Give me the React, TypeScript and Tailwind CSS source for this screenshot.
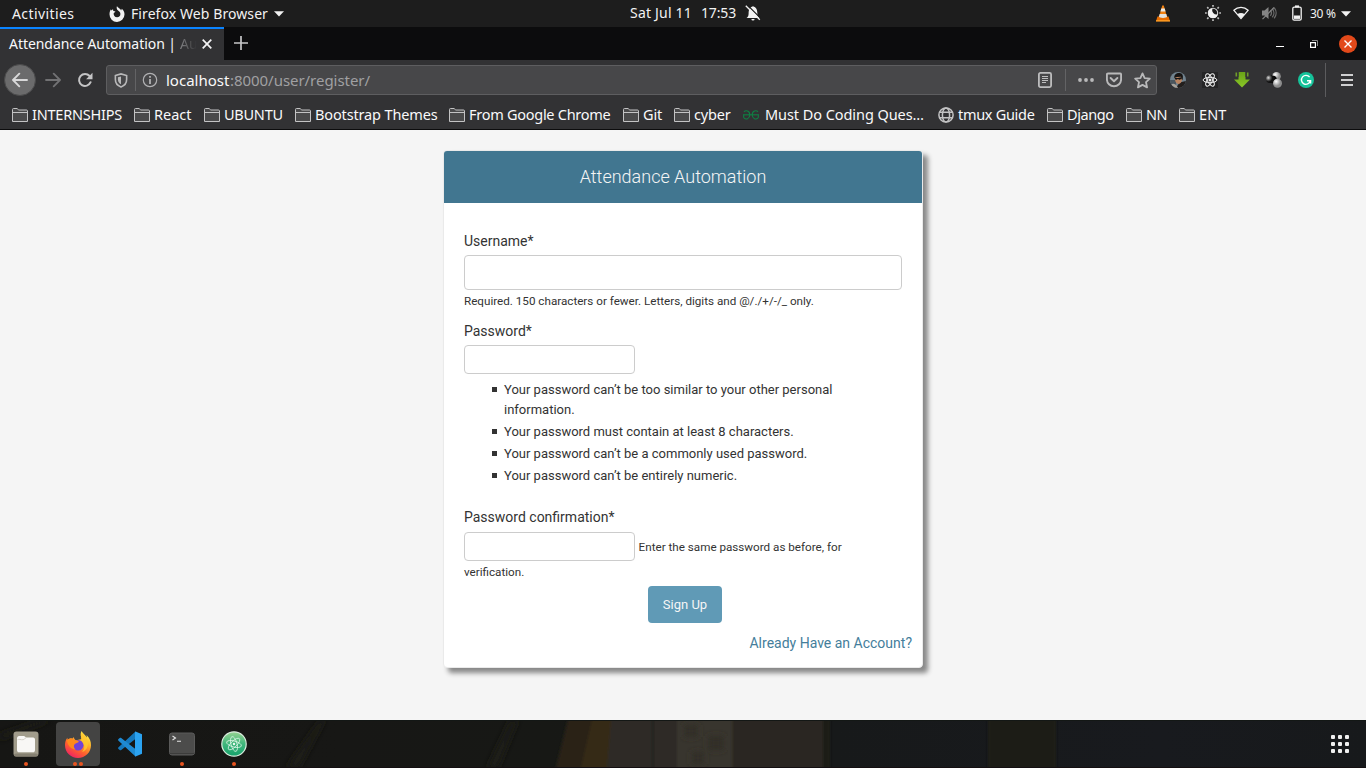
import type { ReactNode } from "react";

type IconProps = { className?: string };

const Caret = ({ className = "" }: IconProps) => (
  <svg viewBox="0 0 10 6" className={`h-[6px] w-[10px] shrink-0 ${className}`}><path d="M0 .3h10L5 5.6z" fill="#f2f2f2" /></svg>
);

const FirefoxSymbolic = ({ className = "" }: IconProps) => (
  <svg viewBox="0 0 16 16" className={`size-[16px] shrink-0 ${className}`}>
    <path d="M8 0c.3 1 1.200 1.600 2.400 2.400C11.400 3 12 3.700 12 4.500c.5-.4.700-1 .6-1.700 1.900 1.300 3 3.400 2.900 5.700A7.500 7.500 0 0 1 .5 8.300C.5 6.300 1 4.600 2 3.300c0 .5.100.9.400 1.200.5-.6 1-1 1.700-1.200-.2.800 0 1.300.4 1.700.7 0 1.500.2 1.900.5-.2.700-1 1-1.700 1.500-.3 2.300 1 4.300 3.400 4.300 2 0 3.500-1.500 3.300-3.500C11.300 6 10 5.300 8.800 4.300 7.700 3.400 7.300 1.500 8 0z" fill="#f2f2f2" />
  </svg>
);

const BellOff = ({ className = "" }: IconProps) => (
  <svg viewBox="0 0 16 16" className={`size-[16px] shrink-0 ${className}`}>
    <path d="M1.500 13h13c-1.500-1-2-2.300-2.100-4.300C12.300 4.500 11.300 2.200 8 1.300 4.700 2.200 3.700 4.500 3.600 8.700 3.500 10.700 3 12 1.500 13zM6.400 14h3.200a1.600 1.600 0 0 1-3.200 0z" fill="#f2f2f2" />
    <path d="M2.200-.1 16 13.700" stroke="#1d1d1d" strokeWidth="1.200" />
    <path d="M.8.700 14.800 14.700" stroke="#f2f2f2" strokeWidth="1.300" />
  </svg>
);

const Cone = ({ className = "" }: IconProps) => (
  <svg viewBox="0 0 16 17" className={`h-[17px] w-[16px] shrink-0 ${className}`}>
    <path d="M2.500 11.500h11l1.500 4.800H1z" fill="#e86c00" />
    <path d="M1 15.200h14v1.300H1z" fill="#ffa126" />
    <path d="M7.200.5h1.600L12 12c-1 1.600-7 1.600-8 0z" fill="#f08010" />
    <path d="M6.300 3.500h3.400l.9 3H5.400z" fill="#eceae6" />
    <path d="M4.700 9h6.600l.8 2.800c-1.200 1.500-7 1.500-8.200 0z" fill="#e4e2de" />
  </svg>
);

const NightLight = ({ className = "" }: IconProps) => (
  <svg viewBox="0 0 16 16" className={`size-[16px] shrink-0 ${className}`}>
    <circle cx="8" cy="8" r="4.700" fill="none" stroke="#d0d0d0" strokeWidth="1.100" />
    <path d="M7.500 3.300A4.900 4.900 0 1 0 12.700 9.500 4.600 4.600 0 0 1 7.500 3.300z" fill="#f2f2f2" />
    <path d="M8 0v1.800M8 14.200V16M0 8h1.800M14.200 8H16M2.200 2.200l1.300 1.300M12.500 12.500l1.300 1.300M2.200 13.800l1.300-1.300M12.500 3.500l1.300-1.300" stroke="#bdbdbd" strokeWidth="1.700" />
  </svg>
);

const Wifi = ({ className = "" }: IconProps) => (
  <svg viewBox="0 0 16 14" className={`h-[14px] w-[16px] shrink-0 ${className}`}>
    <path d="M.9 4.300C4.800.5 11.200.5 15.100 4.300L8 12.600z" fill="none" stroke="#f2f2f2" strokeWidth="1.300" />
    <path d="M4.300 8.200c2.200-1.600 5.200-1.600 7.400 0L8 12.600z" fill="#f2f2f2" />
  </svg>
);

const Muted = ({ className = "" }: IconProps) => (
  <svg viewBox="0 0 16 16" className={`size-[16px] shrink-0 ${className}`}>
    <path d="M1 5.500h2.500L7.500 2v12l-4-3.500H1z" fill="#858585" />
    <path d="M9.300 5.300c1.300 1.500 1.300 3.900 0 5.400M11.300 3.800c2.100 2.400 2.100 6 0 8.400M13.200 2.600c2.500 3.200 2.500 7.600 0 10.800" fill="none" stroke="#6d6d6d" strokeWidth="1.300" />
    <path d="M1.500 14.200 13 2.500" stroke="#858585" strokeWidth="1.200" />
  </svg>
);

const Battery = ({ className = "" }: IconProps) => (
  <svg viewBox="0 0 10 16" className={`h-[16px] w-[10px] shrink-0 ${className}`}>
    <path d="M3 .4h4v2H3z" fill="#f2f2f2" />
    <rect x=".8" y="2.200" width="8.400" height="13" rx="1.400" fill="none" stroke="#f2f2f2" strokeWidth="1.300" />
    <path d="M2 10.500h6v3.400H2z" fill="#f2f2f2" />
  </svg>
);

const Folder = () => (
  <svg viewBox="0 0 16 14" className="h-[14px] w-[16px] shrink-0">
    <path d="M.5 13.500V1.500c0-.6.300-1 1-1h3.600c.7 0 .9 1.500 1.700 1.500h7.700c.7 0 1 .4 1 1v10.500z" fill="#4a4a4b" stroke="#c3c3c4" />
    <path d="M.8 4.500h14.400" stroke="#c3c3c4" />
  </svg>
);

const Geeks = () => (
  <svg viewBox="0 0 16 10" className="h-[10px] w-[16px] shrink-0">
    <path d="M1 1.800C2.500 0 6.800.5 6.800 4.800S2.800 9.600 1.200 8.200C.6 7.600.6 6 .8 5M15 1.800C13.500 0 9.200.5 9.200 4.800s4 4.800 5.600 3.400c.6-.6.600-2.100.4-3.100" fill="none" stroke="#0f8043" strokeWidth="1.100" />
    <path d="M0 4.800h16" stroke="#0f8043" strokeWidth="1.100" />
  </svg>
);

const Globe = () => (
  <svg viewBox="0 0 16 16" className="size-[16px] shrink-0" fill="none" stroke="#c3c3c4" strokeWidth="1.500">
    <circle cx="8" cy="8" r="7.100" /><ellipse cx="8" cy="8" rx="3.600" ry="7.100" /><path d="M1.500 5.200h13M1.500 10.800h13" />
  </svg>
);

type Bookmark = { icon: ReactNode; label: string; cls: string };
const bookmarks: Bookmark[] = [
  { icon: <Folder />, label: "INTERNSHIPS", cls: "ml-[4px] w-[90px] tracking-[-0.223px]" },
  { icon: <Folder />, label: "React", cls: "ml-[4px] w-[38px]" },
  { icon: <Folder />, label: "UBUNTU", cls: "ml-[4px] w-[59px] tracking-[-0.25px]" },
  { icon: <Folder />, label: "Bootstrap Themes", cls: "ml-[4px] w-[122px] tracking-[-0.144px]" },
  { icon: <Folder />, label: "From Google Chrome", cls: "ml-[4px] w-[142px] tracking-[-0.271px]" },
  { icon: <Folder />, label: "Git", cls: "ml-[4px] w-[19px] tracking-[-0.18px]" },
  { icon: <Folder />, label: "cyber", cls: "ml-[4px] w-[37px] tracking-[-0.15px]" },
  { icon: <Geeks />, label: "Must Do Coding Ques…", cls: "ml-[6px] w-[161px] tracking-[-0.066px]" },
  { icon: <Globe />, label: "tmux Guide", cls: "ml-[4px] w-[77px] tracking-[-0.3px]" },
  { icon: <Folder />, label: "Django", cls: "ml-[4px] w-[47px] tracking-[-0.43px]" },
  { icon: <Folder />, label: "NN", cls: "ml-[4px] w-[21px] tracking-[-0.52px]" },
  { icon: <Folder />, label: "ENT", cls: "ml-[4px] w-[28px] tracking-[0.11px]" },
];

function TopBar() {
  return (
    <header className="flex h-[27px] shrink-0 items-center bg-[#1d1d1d] text-[14px] text-[#f2f2f2]">
      <span className="ml-[12px] w-[97px] tracking-[0.417px]">Activities</span>
      <FirefoxSymbolic />
      <span className="ml-[6px] w-[143px] tracking-[0.084px]">Firefox Web Browser</span>
      <Caret />
      <span className="ml-[346px] w-[71px] pb-[2px] tracking-[0.202px]">Sat Jul 11</span>
      <span className="w-[44px] pb-[2px] tracking-[-0.159px]">17:53</span>
      <BellOff className="mb-[2px]" />
      <Cone className="ml-[394px]" />
      <NightLight className="mb-[2px] ml-[34px]" />
      <Wifi className="mb-[1px] ml-[12px]" />
      <Muted className="mb-[1px] ml-[12px]" />
      <Battery className="mb-[2px] ml-[15px]" />
      <span className="ml-[8px] w-[31px] text-[12px] tracking-[-0.3px]">30 %</span>
      <Caret />
    </header>
  );
}

function TabStrip() {
  return (
    <div className="flex h-[33px] shrink-0 items-center bg-[#0c0c0d] text-[14px] text-[#f9f9fa]">
      <div className="flex h-full w-[224px] items-center border-t-2 border-[#0a84ff] bg-[#323234]">
        <span className="ml-[9px] w-[171px] pb-[2px] tracking-[-0.052px]">Attendance Automation |</span>
        <span className="w-[17px] overflow-hidden bg-gradient-to-r from-[#858587] to-[#323234] bg-clip-text pb-[2px] text-transparent">Au</span>
        <svg viewBox="0 0 10 10" className="mb-[2px] ml-[5px] size-[10px]"><path d="m.7.7 8.600 8.600M9.300.7.7 9.300" stroke="#f4f4f5" strokeWidth="1.700" /></svg>
      </div>
      <svg viewBox="0 0 14 14" className="mb-[1px] ml-[10px] size-[14px]"><path d="M7 0v14M0 7h14" stroke="#c6c6c7" strokeWidth="1.700" /></svg>
      <div className="ml-auto flex items-center pr-[9px]">
        <svg viewBox="0 0 8 8" className="size-[8px]"><path d="M0 6h8v1H0z" fill="#fff" /></svg>
        <svg viewBox="0 0 8 8" className="ml-[26px] size-[8px]" fill="none"><path d="M2 .5h5.500V6" stroke="#8a8a8a" /><path d="M.6 2.600h4.800v4.800H.6z" stroke="#fff" strokeWidth="1.200" /></svg>
        <svg viewBox="0 0 18 18" className="ml-[21px] size-[18px]"><circle cx="9" cy="9" r="9" fill="#e2491a" /><path d="m5.500 5.500 7 7M12.500 5.500l-7 7" stroke="#fff" strokeWidth="1.400" /></svg>
      </div>
    </div>
  );
}

function AddressBar() {
  return (
    <div className="flex h-[30px] w-[1051px] items-center rounded-[3px] border border-[#5e5e60] bg-[#474749] text-[15px]">
      <svg viewBox="0 0 14 16" className="ml-[7px] h-[15px] w-[14px]">
        <path d="M1 2.700 7 1l6 1.700V7c0 4-2.500 6.700-6 8-3.500-1.300-6-4-6-8z" fill="none" stroke="#b9b9ba" strokeWidth="1.700" />
        <path d="M7 3.700 3.700 4.600V7c0 2.400 1.200 4 3.300 5z" fill="#b9b9ba" />
      </svg>
      <div className="ml-[7px] h-[22px] w-px bg-[#636365]" />
      <svg viewBox="0 0 16 16" className="ml-[6px] size-[16px]">
        <circle cx="8" cy="8" r="6.700" fill="none" stroke="#b1b1b3" strokeWidth="1.200" />
        <path d="M7.100 4h1.800v1.800H7.100zM7.100 7h1.800v5H7.100z" fill="#b1b1b3" />
      </svg>
      <span className="ml-[8px] w-[64px] text-[#f9f9fa]">localhost</span>
      <span className="tracking-[-0.045px] text-[#a0a0a2]">:8000/user/register/</span>
      <svg viewBox="0 0 14 16" className="ml-auto h-[16px] w-[14px]" fill="none" stroke="#bdbdbe">
        <rect x=".9" y=".9" width="12.200" height="14.200" rx="1.500" strokeWidth="1.800" /><path d="M4 4.500h6M4 6.500h6M4 8.500h6M4 10.500h4" />
      </svg>
      <div className="ml-[13px] h-[22px] w-px bg-[#636365]" />
      <svg viewBox="0 0 16 4" className="ml-[12px] h-[4px] w-[16px]" fill="#b9b9ba"><circle cx="2" cy="2" r="1.900" /><circle cx="8" cy="2" r="1.900" /><circle cx="14" cy="2" r="1.900" /></svg>
      <svg viewBox="0 0 16 16" className="ml-[12px] size-[16px]" fill="none" stroke="#b9b9ba" strokeWidth="1.900">
        <path d="M2 1.500h12c.7 0 1.100.4 1.100 1.100v4.600a7.100 7.100 0 0 1-14.200 0V2.600C.9 1.900 1.300 1.500 2 1.500z" /><path d="m4.600 6 3.400 3.300L11.400 6" strokeLinecap="round" strokeLinejoin="round" />
      </svg>
      <svg viewBox="0 0 16 16" className="mr-[5px] ml-[12px] size-[17px]">
        <path d="m8 1.300 2 4.500 4.900.5-3.600 3.300 1 4.900L8 12.100l-4.300 2.400 1-4.900L1.100 6.300 6 5.800z" fill="none" stroke="#b9b9ba" strokeWidth="1.700" strokeLinejoin="round" />
      </svg>
    </div>
  );
}

function Extensions() {
  return (
    <>
      <svg viewBox="0 0 16 16" className="ml-[13px] size-[16px]">
        <defs><clipPath id="av"><circle cx="8" cy="8" r="8" /></clipPath></defs>
        <g clipPath="url(#av)">
          <path d="M0 0h16v16H0z" fill="#71838f" /><path d="M0 8h6v8H0z" fill="#4b565e" />
          <path d="M6 16 9.500 10.500 16 9v7z" fill="#231f1d" /><path d="M1 12.500c2.500-1.500 5-.5 7 3.500H1z" fill="#a8a29a" />
          <path d="M4.800 5.500 11.500 4c1.200 3.200.5 6.500-2 7.800-2.700.7-4.700-2-4.700-6.300z" fill="#bb8460" />
          <path d="M4.300 6C4 2.500 6.500.8 9.500 1c3 .2 4.200 2.500 3 7l-1-.8L11 4.800 6.500 5z" fill="#171514" />
          <path d="m4.800 5.800 3 .2 3.400-.8.200 1.700-2 .9-1.500-.8-1.600.8-1.400-.6z" fill="#151515" />
        </g>
      </svg>
      <svg viewBox="0 0 16 16" className="ml-[16px] size-[16px]">
        <path d="M0 0h16v16H0z" fill="#252526" />
        <g fill="none" stroke="#f1f1f1" strokeWidth="1"><ellipse cx="8" cy="8" rx="6.900" ry="2.700" /><ellipse cx="8" cy="8" rx="6.900" ry="2.700" transform="rotate(60 8 8)" /><ellipse cx="8" cy="8" rx="6.900" ry="2.700" transform="rotate(120 8 8)" /></g>
        <circle cx="8" cy="8" r="1.500" fill="#f1f1f1" />
      </svg>
      <svg viewBox="0 0 16 16" className="ml-[16px] size-[16px]">
        <defs><linearGradient id="dl" x2="0" y2="1"><stop stopColor="#6aa218" /><stop offset="1" stopColor="#8ac827" /></linearGradient></defs>
        <path d="M4.500 0h7v7.500H16L8 15.500 0 7.500h4.500z" fill="url(#dl)" />
        <path d="M1.500.5h1.700v4H1.500zM12.800.5h1.700v4h-1.700z" fill="#6f9c2a" /><path d="M4 0v5M12 0v5" stroke="#323234" strokeWidth="1" />
      </svg>
      <svg viewBox="0 0 16 16" className="ml-[16px] size-[16px]">
        <defs><radialGradient id="ball" cx=".35" cy=".3"><stop stopColor="#fff" /><stop offset="1" stopColor="#8c8c8c" /></radialGradient><radialGradient id="dark" cx=".3" cy=".35"><stop stopColor="#ddd" /><stop offset=".6" stopColor="#555" /><stop offset="1" stopColor="#111" /></radialGradient></defs>
        <circle cx="10.500" cy="4.300" r="4.300" fill="url(#ball)" /><circle cx="7" cy="7.500" r="3.800" fill="#080808" /><circle cx="4" cy="7" r="4" fill="url(#dark)" /><circle cx="11.500" cy="11.300" r="4.500" fill="url(#ball)" />
      </svg>
      <svg viewBox="0 0 16 16" className="ml-[16px] size-[16px]">
        <circle cx="8" cy="8" r="8" fill="#15c39a" /><path d="M11.600 5.200A4.500 4.500 0 1 0 12.300 9M9 8.800h3.600v2.700" fill="none" stroke="#fff" strokeWidth="1.400" />
      </svg>
      <div className="ml-[11px] h-[34px] w-px bg-[#5c5c5e]" />
      <svg viewBox="0 0 12 12" className="ml-[15px] h-[12px] w-[12px]"><path d="M0 0h12v2H0zM0 5h12v2H0zM0 10h12v2H0z" fill="#cfcfd0" /></svg>
    </>
  );
}

function NavBar() {
  return (
    <nav className="flex h-[40px] shrink-0 items-center bg-[#323234]">
      <div className="ml-[4px] flex size-[32px] items-center justify-center rounded-full border border-[#4a4a4b] bg-[#6b6b6c]">
        <svg viewBox="0 0 16 16" className="size-[16px]" fill="none" stroke="#d8d8d9" strokeWidth="1.900" strokeLinecap="round" strokeLinejoin="round"><path d="M15 8H1.200M7.300 1.700 1 8l6.300 6.300" /></svg>
      </div>
      <svg viewBox="0 0 16 16" className="ml-[9px] size-[16px]" fill="none" stroke="#727274" strokeWidth="1.800" strokeLinecap="round" strokeLinejoin="round"><path d="M1 8h13.800M8.700 1.700 15 8l-6.300 6.300" /></svg>
      <svg viewBox="0 0 16 16" className="ml-[16px] size-[16px]">
        <path d="M13.600 10.200A6 6 0 1 1 12.600 4" fill="none" stroke="#c4c4c5" strokeWidth="2" strokeLinecap="round" /><path d="M15.500.8v6.400H9.100z" fill="#c4c4c5" />
      </svg>
      <div className="ml-[13px]"><AddressBar /></div>
      <Extensions />
    </nav>
  );
}

function Bookmarks() {
  return (
    <div className="flex h-[30px] shrink-0 items-center gap-[12px] border-b border-[#0c0c0d] bg-[#323234] pl-[12px] text-[14.5px] text-[#f9f9fa]">
      {bookmarks.map((b) => (
        <div key={b.label} className="flex items-center">{b.icon}<span className={b.cls}>{b.label}</span></div>
      ))}
    </div>
  );
}

const rules = [
  "Your password can’t be too similar to your other personal information.",
  "Your password must contain at least 8 characters.",
  "Your password can’t be a commonly used password.",
  "Your password can’t be entirely numeric.",
];

function SignUp() {
  return (
    <main className="flex h-[590px] shrink-0 items-start justify-center bg-[#f5f5f5] pt-[20px] font-['Roboto',sans-serif] text-[#333]">
      <form className="flex h-[518px] w-[480px] flex-col rounded-[4px] border border-[#eaeaea] bg-white text-[14px] leading-[20px] shadow-[5px_5px_5px_0px_#888]">
        <h1 className="flex h-[52px] items-center justify-center rounded-t-[3px] bg-[#417690] pr-[20px] text-[18px] font-light text-[#f5f5f5]">Attendance Automation</h1>
        <div className="flex flex-col px-[20px] pt-[28px]">
          <label htmlFor="username">Username*</label>
          <input id="username" className="mt-[4px] h-[35px] rounded-[4px] border border-[#ccc] bg-white px-2" />
          <span className="mt-px text-[11.67px]">Required. 150 characters or fewer. Letters, digits and @/./+/-/_ only.</span>
          <label htmlFor="password" className="mt-[10px]">Password*</label>
          <input id="password" type="password" className="mt-[4px] h-[29px] w-[171px] rounded-[4px] border border-[#ccc] bg-white px-2" />
          <ul className="mt-[6px] flex w-[400px] flex-col gap-[2px] pl-[28px] text-[13px]">
            {rules.map((r) => (
              <li key={r} className="flex"><span className="mt-[7px] mr-[7px] size-[5px] shrink-0 bg-[#333]" /><span>{r}</span></li>
            ))}
          </ul>
          <label htmlFor="confirm" className="mt-[21px]">Password confirmation*</label>
          <div className="mt-[5px] flex h-[29px] items-center">
            <input id="confirm" type="password" className="h-[29px] w-[171px] rounded-[4px] border border-[#ccc] bg-white px-2" />
            <span className="ml-[3.600px] text-[11.67px]">Enter the same password as before, for</span>
          </div>
          <span className="mt-px text-[11.67px]">verification.</span>
          <button type="button" className="mt-[4px] ml-[184px] h-[37px] w-[74px] rounded-[4px] bg-[#609ab6] text-[13px] text-[#f5f5f5]">Sign Up</button>
          <a className="mt-[10px] -mr-[10px] self-end text-[#447e9b]">Already Have an Account?</a>
        </div>
      </form>
    </main>
  );
}

const Wallpaper = () => (
  <svg viewBox="0 0 1366 48" preserveAspectRatio="none" className="absolute inset-0 h-full w-full">
    <defs>
      <linearGradient id="wp" x1="0" x2="1366" gradientUnits="userSpaceOnUse"><stop stopColor="#161614" /><stop offset=".25" stopColor="#171715" /><stop offset=".4" stopColor="#171815" /><stop offset=".61" stopColor="#17191a" /><stop offset=".85" stopColor="#181a1e" /><stop offset="1" stopColor="#17191b" /></linearGradient>
      <filter id="soft"><feGaussianBlur stdDeviation="1.500 0" /></filter>
      <filter id="softer"><feGaussianBlur stdDeviation="3" /></filter>
    </defs>
    <path d="M0 0h1366v48H0z" fill="url(#wp)" />
    <path d="M0 14 40 0h12L0 20zM286 48 320 0h5l-26 48zM487 48 510 0h8l-20 48z" fill="#1c1c18" filter="url(#softer)" />
    <g filter="url(#soft)">
      <path d="M568 0h30l-8 48h-34z" fill="#2a2315" /><path d="M592 0h20l-5 48h-26z" fill="#362917" />
      <path d="M611 0h66v48h-70z" fill="#2d2b27" /><path d="M652 0h1.500v48H652z" fill="#181816" />
      <path d="M677 0h55v48h-55z" fill="#38352d" />
      <path d="M732 0h91v48h-91z" fill="#2b2722" /><path d="M823 0h7v48h-7z" fill="#1b1c18" /><path d="M988 0h68v48h-68z" fill="#1f1e17" />
    </g>
    <path d="M684 5h14v12h-14zM708 16h16v14h-16zM692 32h12v12h-12z" fill="#312e28" filter="url(#softer)" />
    <path d="M0 0h1366v1H0z" fill="#131715" /><path d="M0 47h1366v1H0z" fill="#140f11" />
  </svg>
);

const Dots = ({ count }: { count: number }) => (
  <div className="absolute inset-x-0 bottom-0 flex justify-center gap-[2px]">
    {Array.from({ length: count }, (_, i) => <span key={i} className="size-[4px] rounded-full bg-[#e95420]" />)}
  </div>
);

function Dock() {
  return (
    <footer className="relative flex h-[48px] shrink-0 items-center">
      <Wallpaper />
      <div className="relative ml-[4px] flex h-[44px] w-[44px] items-center justify-center">
        <svg viewBox="0 0 26 26" className="size-[26px]">
          <rect x=".5" y=".5" width="25" height="25" rx="3" fill="#a19c8b" /><rect x="1" y="22.500" width="24" height="3" rx="2" fill="#858071" />
          <path d="M4 7.500C4 6 4.700 5 6.200 5h4.600c1.200 0 1.500 1.500 2.700 1.500H20c1.500 0 2 1 2 2V19c0 1.500-.8 2.300-2.300 2.300H6.300C4.800 21.300 4 20.500 4 19z" fill="#f8f7f5" />
          <path d="M4.500 8.700C5.700 7.800 8 9 10 8.700c1.500-.2 1.500-1.500 3-1.700" fill="none" stroke="#d5d2ca" />
        </svg>
        <Dots count={1} />
      </div>
      <div className="relative ml-[8px] flex h-[44px] w-[44px] items-center justify-center rounded-[4px] bg-[#444443]">
        <svg viewBox="0 0 26 27" className="h-[27px] w-[26px]">
          <defs><linearGradient id="ff" x1=".8" y1="0" x2=".2" y2="1"><stop stopColor="#fff44f" /><stop offset=".35" stopColor="#ffb02a" /><stop offset=".65" stopColor="#ff5f2e" /><stop offset="1" stopColor="#ed1a6b" /></linearGradient></defs>
          <path d="M16.500 0c1.500 2.500 3.800 4 5.300 6.500.1-1 0-1.700-.3-2.500C25 7.300 26 10.500 26 14.300 26 21.500 20.200 27 13 27S0 21.500 0 14.300C0 11 .8 8.600 2.400 6.700c0 1 .1 1.600.4 2.200C4 7.500 5.500 7 7.500 7.500L9 6c-.2 1.500.7 2.700 2 3.200L17 8c-1.500-2.500-2-5-.5-8z" fill="url(#ff)" />
          <circle cx="13.200" cy="14.200" r="5.300" fill="#7242d8" />
          <path d="M2 9c2-2 5-1.500 7-.3l4.800 1.300c-.2 2-2.300 1.800-4 3-1.500 1.200-1.200 4 .7 5.400-5-.3-8-4-8.500-9.400z" fill="#ff8a1c" />
          <path d="M17 2c4.500 4 7 8.500 5.500 13.500-.8 2.800-3 5-5.500 5.500 3-3 3-7.500 0-10.500-1.500-2-1.500-5.500 0-8.500z" fill="#ffc72f" fillOpacity=".85" />
        </svg>
        <Dots count={2} />
      </div>
      <div className="relative ml-[8px] flex h-[44px] w-[44px] items-center justify-center">
        <svg viewBox="0 0 26 26" className="size-[26px]">
          <path d="M18.500.5 1.500 16.300c-.6.500-.6 1 0 1.600l1.200 1c.4.400.9.400 1.500 0L19 7.500z" fill="#1478bd" />
          <path d="M18.500 25.500 1.500 9.700c-.6-.5-.6-1 0-1.600l1.200-1c.4-.4.900-.4 1.500 0L19 18.500z" fill="#1f8ad2" />
          <path d="M18.500.5 25 3.300v19.400l-6.500 2.800c-.3 0-.5-.2-.5-.6V1.100c0-.4.200-.6.500-.6z" fill="#2ba3f1" />
        </svg>
      </div>
      <div className="relative ml-[8px] flex h-[44px] w-[44px] items-center justify-center">
        <svg viewBox="0 0 26 24" className="h-[24px] w-[26px]">
          <rect x=".5" y="1" width="25" height="22" rx="2.500" fill="#4c4c4b" stroke="#5b5b5a" /><path d="M1 21.500h24" stroke="#3c3c3b" />
          <path d="m3.500 4 3 2-3 2M8 9.200h4" fill="none" stroke="#e4e4e4" strokeWidth="1.100" />
        </svg>
        <Dots count={1} />
      </div>
      <div className="relative ml-[8px] flex h-[44px] w-[44px] items-center justify-center">
        <svg viewBox="0 0 26 26" className="size-[26px]">
          <defs><linearGradient id="atom" x2="0" y2="1"><stop stopColor="#97d391" /><stop offset=".5" stopColor="#3fb67c" /><stop offset="1" stopColor="#14a06a" /></linearGradient></defs>
          <circle cx="13" cy="13" r="12.200" fill="url(#atom)" stroke="#d9eadd" strokeWidth="1.200" />
          <g fill="none" stroke="#d8f3e4" strokeWidth=".8"><ellipse cx="13" cy="13" rx="7.600" ry="3" transform="rotate(15 13 13)" /><ellipse cx="13" cy="13" rx="7.600" ry="3" transform="rotate(75 13 13)" /><ellipse cx="13" cy="13" rx="7.600" ry="3" transform="rotate(135 13 13)" /></g>
          <circle cx="13" cy="13" r="1.200" fill="#e9faf0" />
        </svg>
        <Dots count={1} />
      </div>
      <svg viewBox="0 0 18 18" className="relative mr-[17px] ml-auto size-[18px]" fill="#f0f0f0">
        {[0, 7, 14].map((y) => [0, 7, 14].map((x) => <rect key={`${x}-${y}`} x={x} y={y} width="4" height="4" rx="1" />))}
      </svg>
    </footer>
  );
}

export default function App() {
  return (
    <div className="flex h-[768px] w-[1366px] flex-col overflow-hidden whitespace-nowrap font-['Noto_Sans',sans-serif] [&_li]:whitespace-normal">
      <TopBar />
      <TabStrip />
      <NavBar />
      <Bookmarks />
      <SignUp />
      <Dock />
    </div>
  );
}
